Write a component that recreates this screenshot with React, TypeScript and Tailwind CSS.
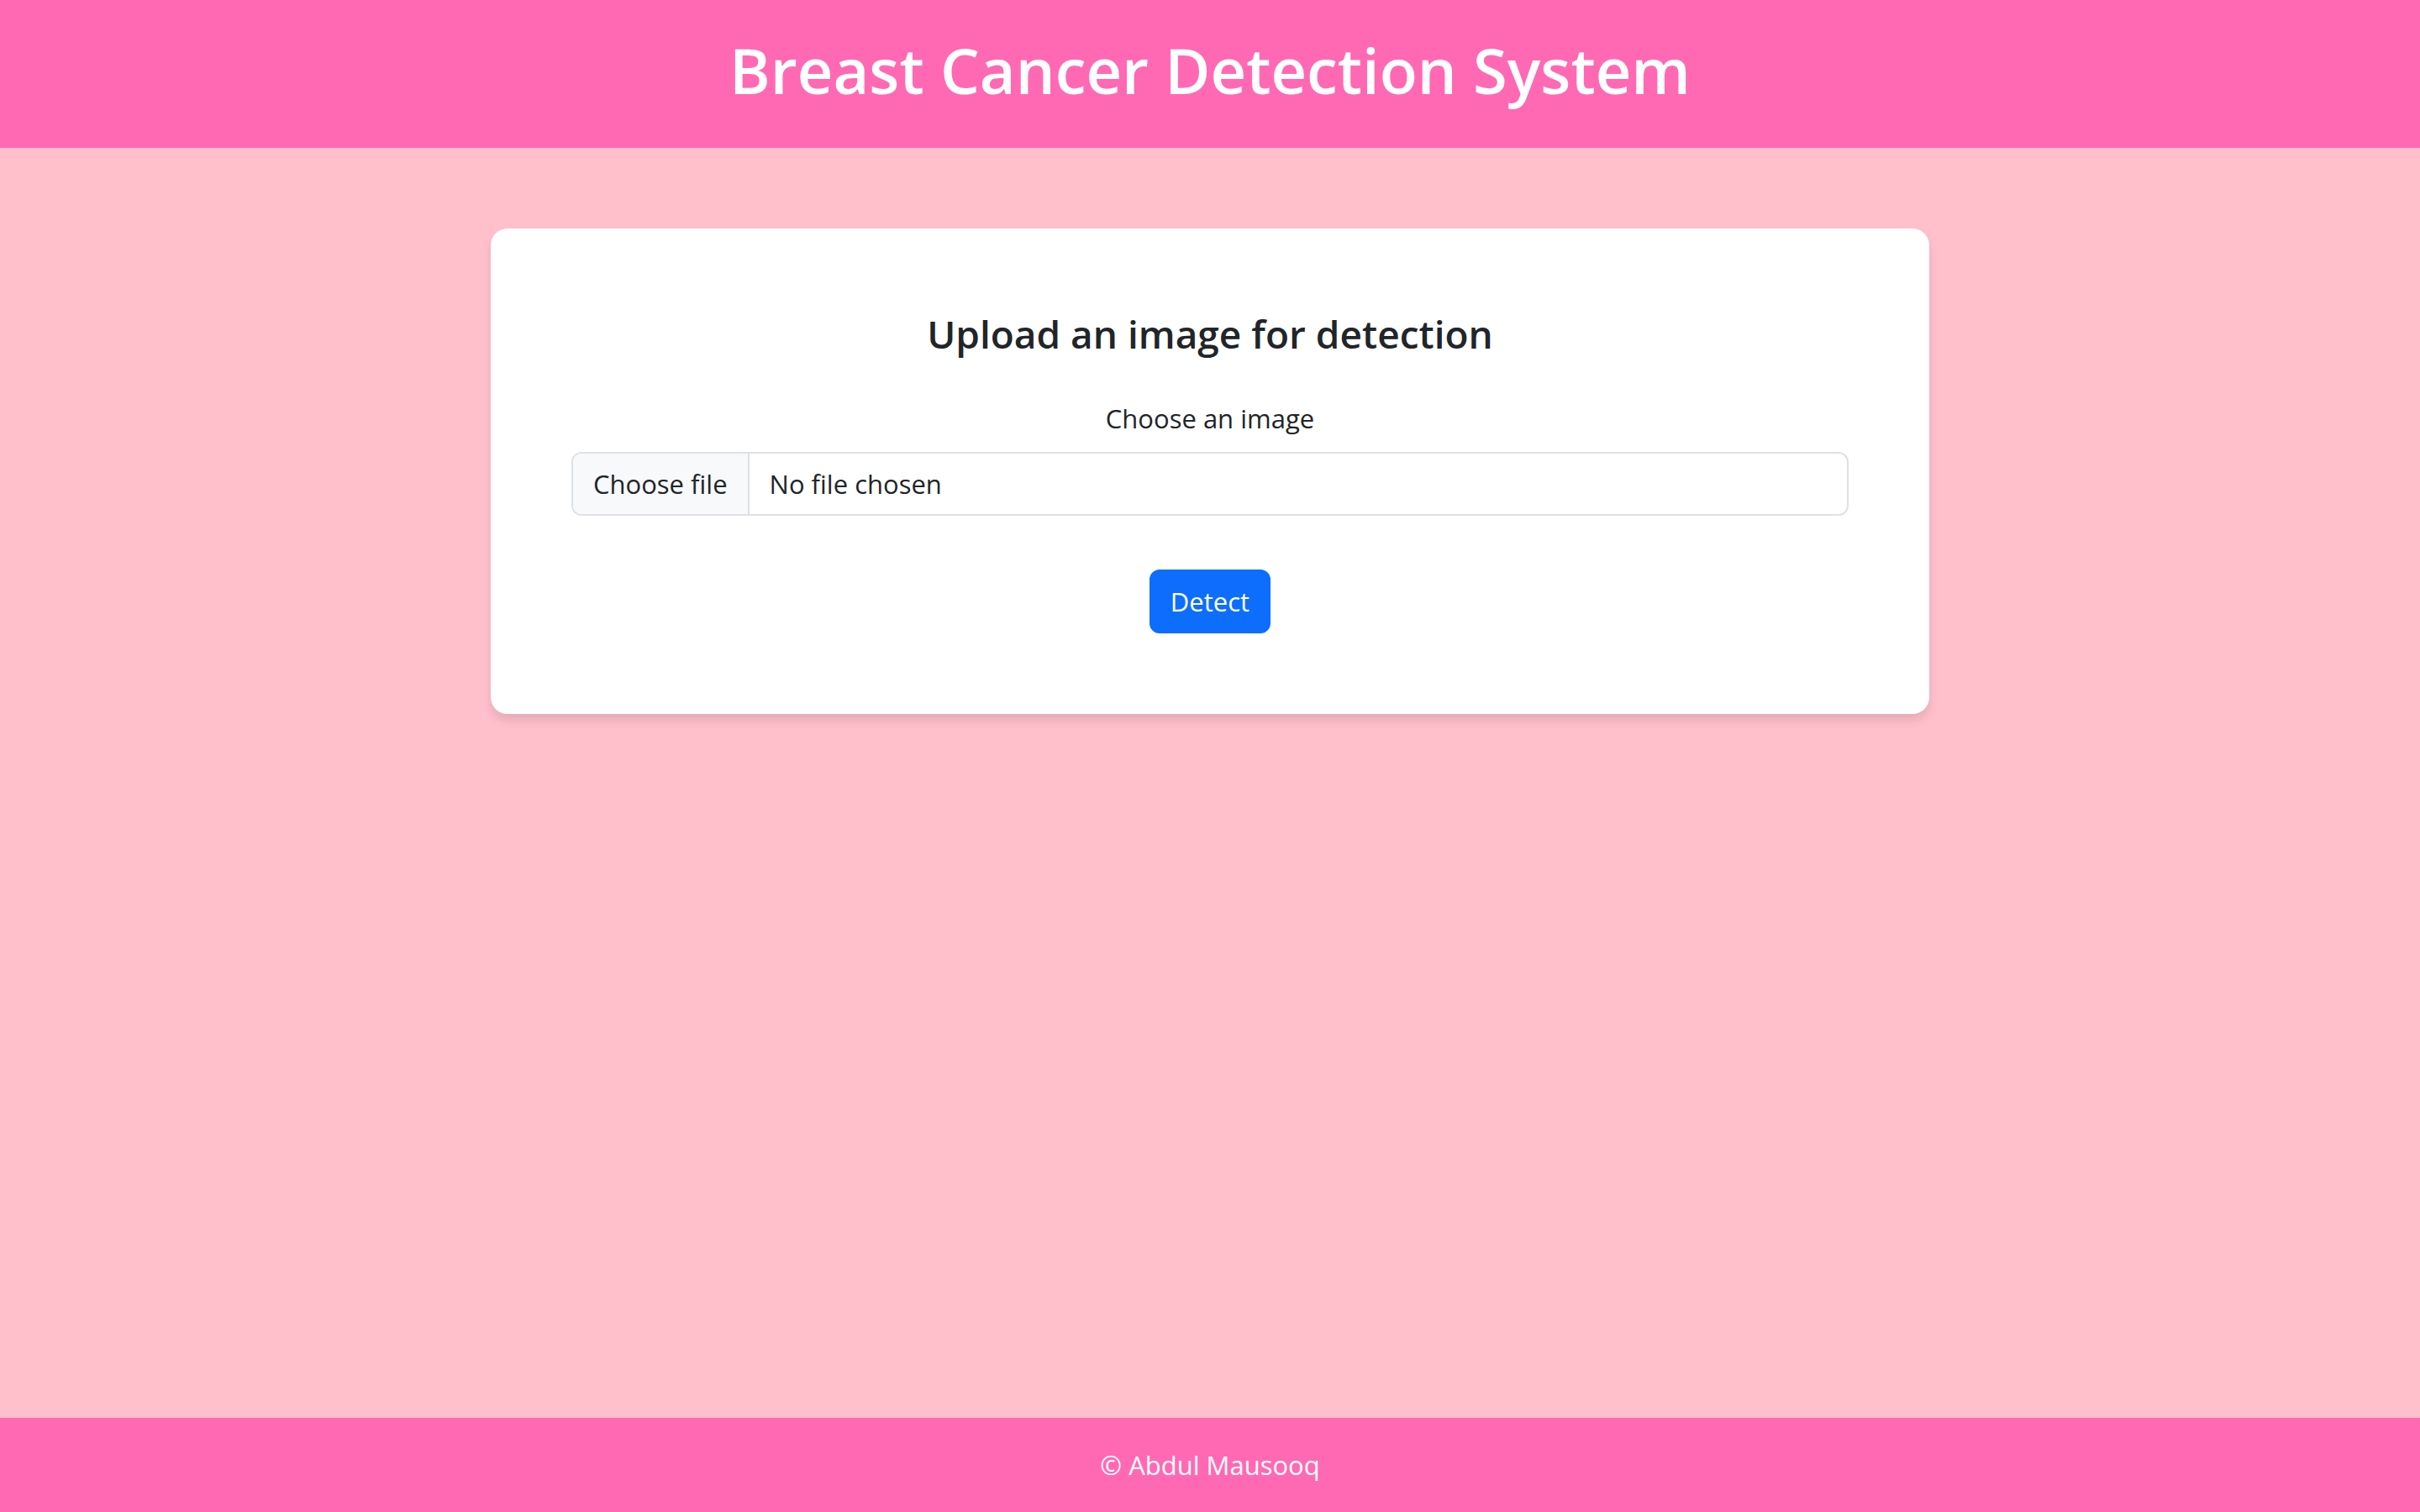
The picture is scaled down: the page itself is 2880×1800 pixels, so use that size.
import { useState } from "react";

export default function App() {
  const [fileName, setFileName] = useState("No file chosen");

  return (
    <div className="flex min-h-screen flex-col bg-[#ffc0cb] font-['Segoe_UI','Open_Sans',sans-serif] text-[31px] leading-[48px] text-[#212529]">
      <header className="bg-[#ff69b4] px-10 pt-9 pb-11 text-center text-white">
        <h1 className="text-[74px] leading-[96px] font-semibold">Breast Cancer Detection System</h1>
      </header>

      <main className="mx-auto w-full max-w-[2640px] grow py-24">
        <div className="mx-auto w-2/3 px-6">
          <section className="rounded-[20px] bg-white p-24 text-center shadow-[0_8px_12px_rgba(0,0,0,0.1)]">
            <h2 className="mb-12 text-[46px] leading-[58px] font-semibold">Upload an image for detection</h2>
            <form onSubmit={(event) => event.preventDefault()}>
              <label htmlFor="image" className="mb-4 block">
                Choose an image
              </label>
              <div className="relative flex overflow-hidden rounded-xl border-2 border-[#dee2e6] bg-white focus-within:border-[#86b7fe]">
                <span className="border-r-2 border-[#dee2e6] bg-[#f8f9fa] px-6 py-3">Choose file</span>
                <span className="px-6 py-3">{fileName}</span>
                <input
                  id="image"
                  type="file"
                  accept="image/*"
                  className="absolute inset-0 w-full cursor-pointer opacity-0"
                  onChange={(event) => setFileName(event.target.files?.[0]?.name ?? "No file chosen")}
                />
              </div>
              <button
                type="submit"
                className="mt-16 w-36 cursor-pointer rounded-xl border-2 border-[#0d6efd] bg-[#0d6efd] py-3 text-white hover:bg-[#0b5ed7]"
              >
                Detect
              </button>
            </form>
          </section>
        </div>
      </main>

      <footer className="bg-[#ff69b4] p-8 text-center text-white">
        <p>© Abdul Mausooq</p>
      </footer>
    </div>
  );
}
